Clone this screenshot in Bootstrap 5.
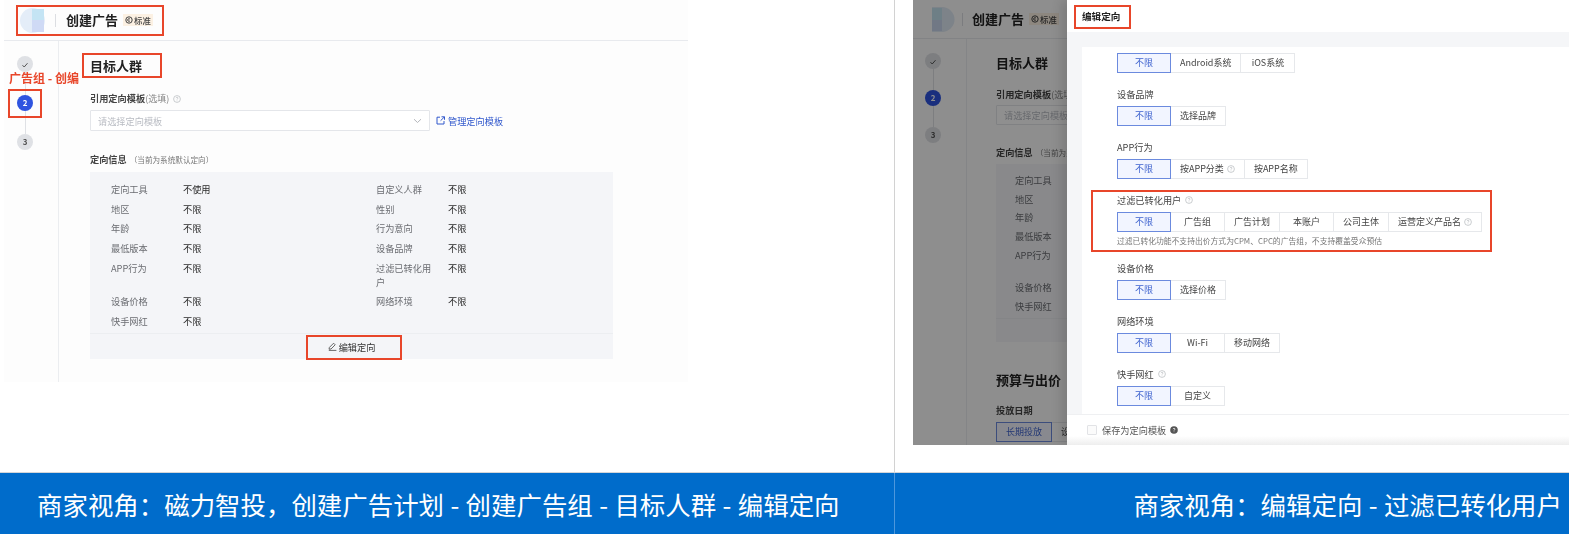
<!DOCTYPE html>
<html lang="zh-CN">
<head>
<meta charset="utf-8">
<title>商家视角</title>
<link href="https://cdn.jsdelivr.net/npm/bootstrap@5.3.0/dist/css/bootstrap.min.css" rel="stylesheet">
<style>
html,body{height:534px;overflow:hidden;background:#fff}
body{font-family:"Noto Sans CJK SC","Liberation Sans",sans-serif;font-size:9.2px;line-height:14px;color:#333}
.slide{width:1569px;height:534px}
.panes{height:473px;border-bottom:1px solid #d4d6d9}
.pane-a{width:895px;border-right:1px solid #d2d2d2}
.pane-b{width:674px;padding-left:18px}
.caps{height:61px;background:#006ccb;color:#fff;font-size:25.45px;word-spacing:.7px;line-height:61px;white-space:nowrap}
.cap-a{width:895px;padding-left:37px;border-right:1px solid #4d97dc}
.cap-b{width:674px;padding-right:7px;text-align:right}
.shot{position:relative;overflow:hidden;background:#fdfdfd;filter:blur(.3px)}
.shot-a{margin-left:4px;width:684px;height:382px;--hdr:41px;--side:55px;--pad:31px;--gap:23px;--panelgap:5.7px;--steppad:13px}
.shot-b{width:656px;height:445px;--hdr:39px;--side:54px;--pad:29px;--gap:21px;--panelgap:4.7px;--steppad:12px}
.hdr{height:var(--hdr);border-bottom:1px solid #e8eaee}
.shot-a .hdr{padding-left:16px}
.shot-b .hdr{padding-left:19px}
.logo{width:25px;height:25px;flex:none}
.shot-b .logo{width:23px;height:25px}
.sep{width:1px;height:13px;background:#dcdee2;margin:0 10px}
.shot-b .sep{margin:0 9px 0 7px}
.ttl{font-size:13px;font-weight:700;line-height:18px;color:#222}
.tier{height:12px;line-height:12px;background:#fcf1e3;color:#444;font-size:8.4px;font-weight:500;padding:0 2px;margin-left:5px;display:flex;align-items:center;gap:1px}
.side{width:var(--side);border-right:1px solid #ebedf0;padding-left:var(--steppad);padding-top:15px;flex:none;height:100%}
.shot-b .side{padding-top:14px}
.dot{width:16px;height:16px;border-radius:50%;background:#dfe1e5;color:#555;font-size:8px;font-weight:700;line-height:16px;text-align:center}
.dot-on{background:#2f54e0;color:#fff}
.link-v{width:1px;height:var(--gap);background:#dfe1e5;margin-left:8px}
.mainc{padding-left:var(--pad);padding-top:16px;flex:none;width:640px}
.shot-b .mainc{padding-top:15px}
.hd{font-size:13px;font-weight:700;line-height:18px;color:#222}
.lbl{font-weight:700;color:#444}
.opt{font-weight:400;color:#888;font-size:9px}
.mt-lbl{margin-top:16px}
.shot-b .mt-lbl{margin-top:15px}
.sel{width:340px;height:21px;border:1px solid #e4e6ea;border-radius:1px;background:#fff;padding:0 7px;color:#b9bcc3;margin-top:4px}
.shot-b .sel{height:20px;margin-top:3px}
.mlink{color:#3158cc;text-decoration:none;margin-left:6px;gap:3px;margin-top:4px}
.info-h{margin-top:21px}
.shot-b .info-h{margin-top:20px}
.sub{font-size:7.6px;color:#777;font-weight:400;margin-left:3px}
.infop{width:523px;background:#f4f5f8;margin-top:5px}
.shot-b .infop{margin-top:4px}
.igrid{display:grid;grid-template-columns:72px 193px 72px 1fr;row-gap:var(--panelgap);padding:10px 0 5px 21px}
.shot-b .igrid{grid-template-columns:1fr;padding:9px 0 5px 19px}
.k-tall{height:28px}
.k{color:#6b6d72;padding-right:12px}
.v{color:#2a2a2a}
.ifoot{height:26px;border-top:1px solid #eceef1;color:#333;gap:2px}
.shot-b .ifoot{height:24px}
.h2b{margin-top:29px}
.lab2{margin-top:14px;font-weight:700;color:#444}
.pill{height:20px;border:1px solid #e6e8eb;background:#fff;color:#444;padding:0 9px;font-size:9px;line-height:18px;min-width:54px;text-align:center;border-radius:0;white-space:nowrap;display:inline-flex;align-items:center;justify-content:center;gap:3px}
.pill+.pill{border-left:0}
.pill-on{background:#f2f5ff;border-color:#6b8ade;color:#3f63cf}
.dim{position:absolute;left:0;top:0;bottom:0;width:154px;background:rgba(0,0,0,.44)}
.drawer{position:absolute;left:154px;top:0;bottom:0;right:0;background:#f5f6f8;box-shadow:-6px 0 10px rgba(0,0,0,.12);display:flex;flex-direction:column}
.dhead{height:32px;background:#fff;padding-left:15px;font-size:9.6px;font-weight:700;line-height:32px;color:#222;flex:none}
.dbody{margin:15px 0 0 15px;background:#fff;flex:1;padding:6px 0 0 35px;overflow:hidden}
.fld{margin-bottom:14px}
.fld-l{height:14px;margin-bottom:5px;color:#444;display:flex;align-items:center;gap:4px}
.hint{font-size:7.8px;color:#777;height:15px;line-height:15px;margin-top:1px;margin-bottom:-1px;white-space:nowrap}
.dfoot{height:31px;background:linear-gradient(#fff 70%,#eeeeee);border-top:1px solid #eff0f2;padding-left:20px;flex:none;gap:5px;color:#555}
.cbx{width:10px;height:10px;border:1px solid #e2e3e6;border-radius:1px;background:#fbfbfb}
.mk{position:absolute;border:2px solid #e8462a;pointer-events:none}
.mk-t{position:absolute;color:#e8462a;font-size:12px;font-weight:700;line-height:14px;white-space:nowrap}
</style>
</head>
<body>
<div class="slide d-flex flex-column">
  <div class="panes d-flex">
    <div class="pane-a">
      <div class="shot shot-a">
        <div class="hdr d-flex align-items-center">
          <svg class="logo" viewBox="0 0 25 25"><circle cx="12.5" cy="12.5" r="12.5" fill="#e4edf8"/><rect x="12" y="1" width="12" height="11" fill="#c4e4f4"/><rect x="12" y="12" width="12" height="12" fill="#cfdaf5"/></svg>
          <span class="sep"></span>
          <span class="ttl">创建广告</span>
          <span class="tier"><svg width="8" height="8" viewBox="0 0 8 8"><circle cx="4" cy="4" r="3.2" fill="none" stroke="#444"/><path d="M5 3.2A1.3 1.3 0 1 0 5 4.8" fill="none" stroke="#444"/></svg>标准</span>
        </div>
        <div class="d-flex" style="height:341px">
          <div class="side">
            <div class="dot"><svg width="8" height="8" viewBox="0 0 8 8"><path d="M1.5 4.2 3.2 6 6.5 2.2" fill="none" stroke="#555"/></svg></div>
            <div class="link-v"></div>
            <div class="dot dot-on">2</div>
            <div class="link-v"></div>
            <div class="dot">3</div>
          </div>
          <div class="mainc">
            <div class="hd">目标人群</div>
            <div class="lbl mt-lbl d-flex align-items-center gap-1"><span>引用定向模板<span class="opt">(选填)</span></span><svg width="8" height="8" viewBox="0 0 8 8"><circle cx="4" cy="4" r="3.4" fill="none" stroke="#b5b7bc" stroke-width=".7"/><path d="M3 3.1c.2-1 2-1 2 0 0 .7-1 .7-1 1.5M4 5.6v.5" fill="none" stroke="#b5b7bc" stroke-width=".7"/></svg></div>
            <div class="d-flex align-items-center">
              <div class="sel d-flex align-items-center justify-content-between">
                <span>请选择定向模板</span>
                <svg width="9" height="6" viewBox="0 0 9 6"><path d="M1 1.2 4.5 4.5 8 1.2" fill="none" stroke="#b5b7bc"/></svg>
              </div>
              <a class="mlink d-flex align-items-center" href="#"><svg width="9" height="9" viewBox="0 0 9 9"><path d="M4 1.2H1v6.8h7V5M5.5.8h3v3M8.3 1 4.6 4.7" fill="none" stroke="#3158cc"/></svg>管理定向模板</a>
            </div>
            <div class="lbl info-h">定向信息<span class="sub">（当前为系统默认定向）</span></div>
            <div class="infop">
              <div class="igrid">
                <div class="k">定向工具</div><div class="v">不使用</div><div class="k">自定义人群</div><div class="v">不限</div>
                <div class="k">地区</div><div class="v">不限</div><div class="k">性别</div><div class="v">不限</div>
                <div class="k">年龄</div><div class="v">不限</div><div class="k">行为意向</div><div class="v">不限</div>
                <div class="k">最低版本</div><div class="v">不限</div><div class="k">设备品牌</div><div class="v">不限</div>
                <div class="k">APP行为</div><div class="v">不限</div><div class="k">过滤已转化用户</div><div class="v">不限</div>
                <div class="k">设备价格</div><div class="v">不限</div><div class="k">网络环境</div><div class="v">不限</div>
                <div class="k">快手网红</div><div class="v">不限</div><div></div><div></div>
              </div>
              <div class="ifoot d-flex align-items-center justify-content-center"><svg width="9" height="9" viewBox="0 0 9 9"><path d="M1 7.2 1.4 5.4 5.6 1.2l1.6 1.6L3 7zM.8 8.4h7.6" fill="none" stroke="#444" stroke-width=".8"/></svg>编辑定向</div>
            </div>
          </div>
        </div>
        <div class="mk" style="left:12px;top:5px;width:148px;height:31px"></div>
        <div class="mk" style="left:78px;top:53px;width:80px;height:25px"></div>
        <div class="mk" style="left:4px;top:89px;width:34px;height:29px"></div>
        <div class="mk-t" style="left:5px;top:71px">广告组 - 创编</div>
        <div class="mk" style="left:302px;top:335px;width:96px;height:25px"></div>
      </div>
    </div>
    <div class="pane-b">
      <div class="shot shot-b">
        <div class="hdr d-flex align-items-center">
          <svg class="logo" viewBox="0 0 23 25"><path d="M0 0H10A12.500 12.500 0 0 1 10 25H0Z" fill="#dfe9f4"/><rect x="0" y="1" width="10" height="12" fill="#c4e2ef"/><rect x="0" y="13" width="10" height="11" fill="#cad7ee"/></svg>
          <span class="sep"></span>
          <span class="ttl">创建广告</span>
          <span class="tier"><svg width="8" height="8" viewBox="0 0 8 8"><circle cx="4" cy="4" r="3.2" fill="none" stroke="#444"/><path d="M5 3.2A1.3 1.3 0 1 0 5 4.8" fill="none" stroke="#444"/></svg>标准</span>
        </div>
        <div class="d-flex" style="height:406px">
          <div class="side">
            <div class="dot"><svg width="8" height="8" viewBox="0 0 8 8"><path d="M1.5 4.2 3.2 6 6.5 2.2" fill="none" stroke="#555"/></svg></div>
            <div class="link-v"></div>
            <div class="dot dot-on">2</div>
            <div class="link-v"></div>
            <div class="dot">3</div>
          </div>
          <div class="mainc">
            <div class="hd">目标人群</div>
            <div class="lbl mt-lbl">引用定向模板<span class="opt">(选填)</span></div>
            <div class="sel d-flex align-items-center"><span>请选择定向模板</span></div>
            <div class="lbl info-h">定向信息<span class="sub">（当前为系</span></div>
            <div class="infop">
              <div class="igrid">
                <div class="k">定向工具</div>
                <div class="k">地区</div>
                <div class="k">年龄</div>
                <div class="k">最低版本</div>
                <div class="k k-tall">APP行为</div>
                <div class="k">设备价格</div>
                <div class="k">快手网红</div>
              </div>
              <div class="ifoot"></div>
            </div>
            <div class="hd h2b">预算与出价</div>
            <div class="lab2">投放日期</div>
            <div class="d-flex" style="margin-top:5px"><span class="pill pill-on">长期投放</span><span class="pill justify-content-start">设置</span></div>
          </div>
        </div>
        <div class="dim"></div>
        <div class="drawer">
          <div class="dhead">编辑定向</div>
          <div class="dbody">
            <div class="fld"><div class="d-flex"><span class="pill pill-on">不限</span><span class="pill">Android系统</span><span class="pill">iOS系统</span></div></div>
            <div class="fld"><div class="fld-l">设备品牌</div><div class="d-flex"><span class="pill pill-on">不限</span><span class="pill">选择品牌</span></div></div>
            <div class="fld"><div class="fld-l">APP行为</div><div class="d-flex"><span class="pill pill-on">不限</span><span class="pill">按APP分类<svg width="8" height="8" viewBox="0 0 8 8"><circle cx="4" cy="4" r="3.4" fill="none" stroke="#b5b7bc" stroke-width=".7"/><path d="M3 3.1c.2-1 2-1 2 0 0 .7-1 .7-1 1.5M4 5.6v.5" fill="none" stroke="#b5b7bc" stroke-width=".7"/></svg></span><span class="pill">按APP名称</span></div></div>
            <div class="fld"><div class="fld-l">过滤已转化用户<svg width="8" height="8" viewBox="0 0 8 8"><circle cx="4" cy="4" r="3.4" fill="none" stroke="#b5b7bc" stroke-width=".7"/><path d="M3 3.1c.2-1 2-1 2 0 0 .7-1 .7-1 1.5M4 5.6v.5" fill="none" stroke="#b5b7bc" stroke-width=".7"/></svg></div><div class="d-flex"><span class="pill pill-on">不限</span><span class="pill">广告组</span><span class="pill">广告计划</span><span class="pill">本账户</span><span class="pill">公司主体</span><span class="pill">运营定义产品名<svg width="8" height="8" viewBox="0 0 8 8"><circle cx="4" cy="4" r="3.4" fill="none" stroke="#b5b7bc" stroke-width=".7"/><path d="M3 3.1c.2-1 2-1 2 0 0 .7-1 .7-1 1.5M4 5.6v.5" fill="none" stroke="#b5b7bc" stroke-width=".7"/></svg></span></div><div class="hint">过滤已转化功能不支持出价方式为CPM、CPC的广告组，不支持覆盖受众预估</div></div>
            <div class="fld"><div class="fld-l">设备价格</div><div class="d-flex"><span class="pill pill-on">不限</span><span class="pill">选择价格</span></div></div>
            <div class="fld"><div class="fld-l">网络环境</div><div class="d-flex"><span class="pill pill-on">不限</span><span class="pill">Wi-Fi</span><span class="pill">移动网络</span></div></div>
            <div class="fld"><div class="fld-l">快手网红<svg width="8" height="8" viewBox="0 0 8 8"><circle cx="4" cy="4" r="3.4" fill="none" stroke="#b5b7bc" stroke-width=".7"/><path d="M3 3.1c.2-1 2-1 2 0 0 .7-1 .7-1 1.5M4 5.6v.5" fill="none" stroke="#b5b7bc" stroke-width=".7"/></svg></div><div class="d-flex"><span class="pill pill-on">不限</span><span class="pill">自定义</span></div></div>
          </div>
          <div class="dfoot d-flex align-items-center"><span class="cbx"></span><span class="d-flex align-items-center gap-1">保存为定向模板<svg width="8" height="8" viewBox="0 0 8 8"><circle cx="4" cy="4" r="3.8" fill="#555"/><path d="M3 3.1c.2-1 2-1 2 0 0 .7-1 .7-1 1.5M4 5.6v.5" fill="none" stroke="#fff" stroke-width=".8"/></svg></span></div>
        </div>
        <div class="mk" style="left:161px;top:5px;width:57px;height:24px"></div>
        <div class="mk" style="left:178px;top:190px;width:401px;height:62px"></div>
      </div>
    </div>
  </div>
  <div class="caps d-flex">
    <div class="cap-a">商家视角：磁力智投，创建广告计划 - 创建广告组 - 目标人群 - 编辑定向</div>
    <div class="cap-b">商家视角：编辑定向 - 过滤已转化用户</div>
  </div>
</div>
<script src="https://cdn.jsdelivr.net/npm/bootstrap@5.3.0/dist/js/bootstrap.bundle.min.js"></script>
</body>
</html>
